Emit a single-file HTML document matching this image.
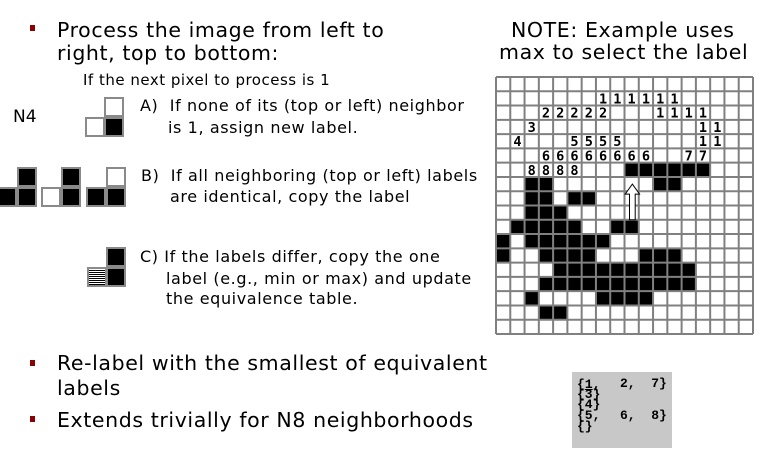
<!DOCTYPE html>
<html><head><meta charset="utf-8"><style>
html,body{margin:0;padding:0;background:#fff;}
body{width:769px;height:453px;position:relative;overflow:hidden;font-family:"DejaVu Sans","Liberation Sans",sans-serif;color:#000;}
.t{position:absolute;white-space:nowrap;line-height:1;}
.big{font-size:20.5px;letter-spacing:0.6px;}
.sm{font-size:15px;letter-spacing:0.5px;}
.md{font-size:16px;letter-spacing:0.6px;}
.b{position:absolute;width:5px;height:6px;background:#8b0000;}
.c{position:absolute;width:16px;height:16px;border:2px solid #8a8a8a;background:#fff;}
.k{background:#000;}
.eq{position:absolute;font-family:"Liberation Mono","DejaVu Sans Mono",monospace;font-weight:bold;font-size:13px;line-height:1;white-space:pre;}
</style></head><body>

<div class="b" style="left:30px;top:25px"></div>
<div class="t big" style="left:57px;top:20px">Process the image from left to</div>
<div class="t big" style="left:57px;top:43px">right, top to bottom:</div>
<div class="t sm" style="left:83px;top:73px">If the next pixel to process is 1</div>
<div class="t" style="left:13px;top:109px;font-size:17px">N4</div>

<div class="t md" style="left:140px;top:98px">A)&nbsp; If none of its (top or left) neighbor</div>
<div class="t md" style="left:168px;top:120px">is 1, assign new label.</div>
<div class="t md" style="left:141px;top:168px">B)&nbsp; If all neighboring (top or left) labels</div>
<div class="t md" style="left:170px;top:189px">are identical, copy the label</div>
<div class="t md" style="left:140px;top:249px">C) If the labels differ, copy the one</div>
<div class="t md" style="left:166px;top:271px">label (e.g., min or max) and update</div>
<div class="t md" style="left:166px;top:291px">the equivalence table.</div>

<div class="c" style="left:104px;top:97px"></div>
<div class="c" style="left:85px;top:117px"></div>
<div class="c k" style="left:104px;top:117px"></div>
<div class="c k" style="left:17px;top:167px"></div>
<div class="c k" style="left:-3px;top:187px"></div>
<div class="c k" style="left:17px;top:187px"></div>
<div class="c k" style="left:61px;top:167px"></div>
<div class="c" style="left:41px;top:187px"></div>
<div class="c k" style="left:61px;top:187px"></div>
<div class="c" style="left:106px;top:167px"></div>
<div class="c k" style="left:86px;top:187px"></div>
<div class="c k" style="left:106px;top:187px"></div>
<div class="c k" style="left:106px;top:247px"></div>
<div class="c" style="left:87px;top:267px;background:repeating-linear-gradient(#fff 0 1px,#000 1px 2px)"></div>
<div class="c k" style="left:106px;top:267px"></div>

<div class="b" style="left:30px;top:360px"></div>
<div class="t big" style="left:57px;top:353px">Re-label with the smallest of equivalent</div>
<div class="t big" style="left:57px;top:378px">labels</div>
<div class="b" style="left:30px;top:416px"></div>
<div class="t big" style="left:57px;top:410px">Extends trivially for N8 neighborhoods</div>

<div class="t big" style="left:511px;top:20px">NOTE: Example uses</div>
<div class="t big" style="left:499px;top:42px">max to select the label</div>

<svg style="position:absolute;left:495px;top:76px" width="259" height="259" viewBox="-0.07 -0.07 18.14 18.14">
<rect width="18" height="18" fill="#fff"/>
<g fill="#000">
<rect x="9" y="6" width="6" height="1"/>
<rect x="2" y="7" width="2" height="1"/><rect x="11" y="7" width="2" height="1"/>
<rect x="2" y="8" width="2" height="1"/><rect x="5" y="8" width="2" height="1"/>
<rect x="2" y="9" width="3" height="1"/>
<rect x="1" y="10" width="5" height="1"/><rect x="8" y="10" width="2" height="1"/>
<rect x="0" y="11" width="1" height="1"/><rect x="2" y="11" width="6" height="1"/>
<rect x="0" y="12" width="1" height="1"/><rect x="3" y="12" width="4" height="1"/><rect x="10" y="12" width="3" height="1"/>
<rect x="4" y="13" width="10" height="1"/>
<rect x="3" y="14" width="11" height="1"/>
<rect x="2" y="15" width="1" height="1"/><rect x="7" y="15" width="4" height="1"/>
<rect x="3" y="16" width="2" height="1"/>
</g>
<path stroke="#808080" stroke-width="0.14" fill="none" d="M0 0H18M0 1H18M0 2H18M0 3H18M0 4H18M0 5H18M0 6H18M0 7H18M0 8H18M0 9H18M0 10H18M0 11H18M0 12H18M0 13H18M0 14H18M0 15H18M0 16H18M0 17H18M0 18H18M0 0V18M1 0V18M2 0V18M3 0V18M4 0V18M5 0V18M6 0V18M7 0V18M8 0V18M9 0V18M10 0V18M11 0V18M12 0V18M13 0V18M14 0V18M15 0V18M16 0V18M17 0V18M18 0V18"/>
<path d="M9.55 7.5 L10.05 8.2 H9.75 V10 H9.35 V8.2 H9.05 Z" fill="#fff" stroke="#000" stroke-width="0.07"/>
<g font-family="DejaVu Sans Mono,Liberation Mono,monospace" font-weight="bold" font-size="0.95" text-anchor="middle">
<text y="1.85"><tspan x="7.5">1</tspan><tspan x="8.5">1</tspan><tspan x="9.5">1</tspan><tspan x="10.5">1</tspan><tspan x="11.5">1</tspan><tspan x="12.5">1</tspan></text>
<text y="2.85"><tspan x="3.5">2</tspan><tspan x="4.5">2</tspan><tspan x="5.5">2</tspan><tspan x="6.5">2</tspan><tspan x="7.5">2</tspan><tspan x="11.5">1</tspan><tspan x="12.5">1</tspan><tspan x="13.5">1</tspan><tspan x="14.5">1</tspan></text>
<text y="3.85"><tspan x="2.5">3</tspan><tspan x="14.5">1</tspan><tspan x="15.5">1</tspan></text>
<text y="4.85"><tspan x="1.5">4</tspan><tspan x="5.5">5</tspan><tspan x="6.5">5</tspan><tspan x="7.5">5</tspan><tspan x="8.5">5</tspan><tspan x="14.5">1</tspan><tspan x="15.5">1</tspan></text>
<text y="5.85"><tspan x="3.5">6</tspan><tspan x="4.5">6</tspan><tspan x="5.5">6</tspan><tspan x="6.5">6</tspan><tspan x="7.5">6</tspan><tspan x="8.5">6</tspan><tspan x="9.5">6</tspan><tspan x="10.5">6</tspan><tspan x="13.5">7</tspan><tspan x="14.5">7</tspan></text>
<text y="6.85"><tspan x="2.5">8</tspan><tspan x="3.5">8</tspan><tspan x="4.5">8</tspan><tspan x="5.5">8</tspan></text>
</g>
</svg>

<div style="position:absolute;left:572px;top:372px;width:100px;height:76px;background:#c8c8c8"></div>
<div class="eq" style="left:577px;top:378px">{<u>1</u>,</div>
<div class="eq" style="left:620px;top:377px">2,  7}</div>
<div class="eq" style="left:577px;top:388px">{3}</div>
<div class="eq" style="left:577px;top:398px">{4}</div>
<div class="eq" style="left:577px;top:409px">{5,</div>
<div class="eq" style="left:620px;top:409px">6,  8}</div>
<div class="eq" style="left:577px;top:420px">{}</div>
</body></html>
